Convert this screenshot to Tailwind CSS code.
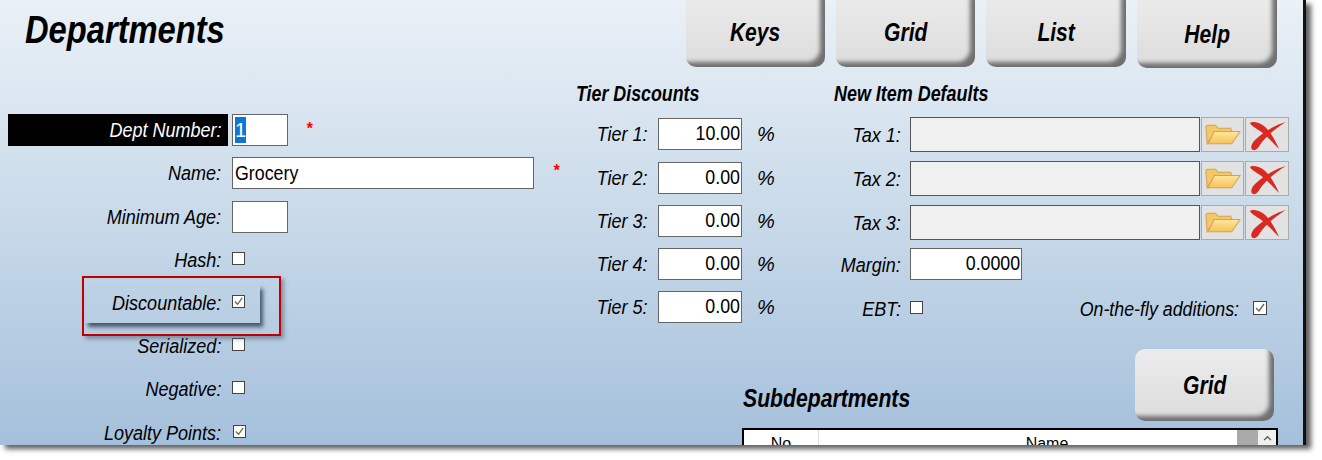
<!DOCTYPE html>
<html lang="en">
<head>
  <meta charset="UTF-8">
  <title>Departments</title>
  <script src="https://cdn.jsdelivr.net/npm/@tailwindcss/browser@4"></script>
</head>
<body class="bg-white font-['Liberation_Sans',Arial,sans-serif] text-black">
  <div class="relative w-[1322px] h-[460px] overflow-hidden bg-white">
    <!-- Window -->
    <div class="relative w-[1306px] h-[445px] overflow-hidden border-r-[3px] border-[#111] bg-gradient-to-b from-[#eaf1f7] via-[#c8d9e9] to-[#a5c0dc] shadow-[5px_4px_5px_rgba(40,40,40,0.75)]">

      <!-- Header -->
      <div class="flex h-[68px]">
        <h1 class="ml-[25px] mt-[9px] text-[38px] leading-[42px] font-bold italic origin-left scale-x-[0.86]">Departments</h1>
        <div class="ml-auto mr-[26px] flex gap-[11px] -mt-[8px]">
          <button class="w-[139px] h-[75px] rounded-[10px] bg-gradient-to-b from-[#ececec] to-[#dcdcdc] shadow-[inset_-8px_-8px_4px_-3px_#707070] pt-[6px] text-[26px] font-bold italic"><span class="inline-block scale-x-[0.81]">Keys</span></button>
          <button class="w-[139px] h-[75px] rounded-[10px] bg-gradient-to-b from-[#ececec] to-[#dcdcdc] shadow-[inset_-8px_-8px_4px_-3px_#707070] pt-[6px] text-[26px] font-bold italic"><span class="inline-block scale-x-[0.81]">Grid</span></button>
          <button class="w-[140px] h-[75px] rounded-[10px] bg-gradient-to-b from-[#ececec] to-[#dcdcdc] shadow-[inset_-8px_-8px_4px_-3px_#707070] pt-[6px] text-[26px] font-bold italic"><span class="inline-block scale-x-[0.81]">List</span></button>
          <button class="w-[140px] h-[76px] rounded-[10px] bg-gradient-to-b from-[#ececec] to-[#dcdcdc] shadow-[inset_-8px_-8px_4px_-3px_#707070] pt-[8px] text-[26px] font-bold italic"><span class="inline-block scale-x-[0.81]">Help</span></button>
        </div>
      </div>

      <div class="flex">
        <!-- Left column -->
        <div class="w-[576px] shrink-0 pt-[46px] text-[20px] italic">
          <div class="flex h-[43px] items-start">
            <div class="ml-[8px] w-[220px] h-[32px] bg-black text-white text-right pr-[7px] leading-[32px]"><span class="inline-block origin-right scale-x-[0.9]">Dept Number:</span></div>
            <div class="ml-[4px] w-[56px] h-[32px] border border-[#666] bg-white p-[2px] not-italic text-[20px] leading-[26px]"><span class="block w-[11px] bg-[#0b78d7] text-white">1</span></div>
            <span class="ml-[18px] mt-[3px] text-[#f00] text-[16px] font-bold">*</span>
          </div>
          <div class="flex h-[44px] items-start">
            <div class="w-[221px] text-right leading-[32px]"><span class="inline-block origin-right scale-x-[0.9]">Name:</span></div>
            <div class="ml-[11px] w-[302px] h-[32px] border border-[#666] bg-white pl-[2px] not-italic text-[20px] leading-[30px]"><span class="inline-block origin-left scale-x-[0.89]">Grocery</span></div>
            <span class="ml-[19px] mt-[2px] text-[#f00] text-[16px] font-bold">*</span>
          </div>
          <div class="flex h-[43px] items-start">
            <div class="w-[221px] text-right leading-[32px]"><span class="inline-block origin-right scale-x-[0.9]">Minimum Age:</span></div>
            <div class="ml-[11px] w-[56px] h-[32px] border border-[#666] bg-white"></div>
          </div>
          <div class="flex h-[43px] items-start">
            <div class="w-[221px] text-right leading-[32px]"><span class="inline-block origin-right scale-x-[0.9]">Hash:</span></div>
            <div class="ml-[11px] mt-[8px] w-[13px] h-[13px] border border-[#444] bg-white"></div>
          </div>
          <div class="flex h-[43px] items-start">
            <div class="w-[221px] text-right leading-[32px]"><span class="inline-block origin-right scale-x-[0.9]">Discountable:</span></div>
            <div class="ml-[11px] mt-[8px] w-[13px] h-[13px] border border-[#444] bg-white">
              <svg viewBox="0 0 12 12" class="w-[11px] h-[11px]"><path d="M2 6l3 3 5-7" fill="none" stroke="#666" stroke-width="1.4"/></svg>
            </div>
          </div>
          <div class="flex h-[43px] items-start">
            <div class="w-[221px] text-right leading-[32px]"><span class="inline-block origin-right scale-x-[0.9]">Serialized:</span></div>
            <div class="ml-[11px] mt-[8px] w-[13px] h-[13px] border border-[#444] bg-white"></div>
          </div>
          <div class="flex h-[44px] items-start">
            <div class="w-[221px] text-right leading-[32px]"><span class="inline-block origin-right scale-x-[0.9]">Negative:</span></div>
            <div class="ml-[11px] mt-[8px] w-[13px] h-[13px] border border-[#444] bg-white"></div>
          </div>
          <div class="flex h-[32px] items-start">
            <div class="w-[221px] text-right leading-[32px]"><span class="inline-block origin-right scale-x-[0.9]">Loyalty Points:</span></div>
            <div class="ml-[12px] mt-[8px] w-[13px] h-[13px] border border-[#444] bg-white">
              <svg viewBox="0 0 12 12" class="w-[11px] h-[11px]"><path d="M2 6l3 3 5-7" fill="none" stroke="#666" stroke-width="1.4"/></svg>
            </div>
          </div>
        </div>

        <!-- Tier discounts -->
        <div class="w-[258px] shrink-0 text-[20px] italic">
          <h2 class="mt-[13px] h-[37px] text-[22px] leading-[25px] font-bold origin-left scale-x-[0.81] whitespace-nowrap">Tier Discounts</h2>
          <div class="flex h-[44px] items-start">
            <div class="w-[72px] text-right leading-[32px]"><span class="inline-block origin-right scale-x-[0.9]">Tier 1:</span></div>
            <div class="ml-[10px] w-[84px] h-[32px] border border-[#666] bg-white pr-[1px] text-right not-italic text-[20px] leading-[28px]"><span class="inline-block origin-right scale-x-[0.89]">10.00</span></div>
            <span class="ml-[15px] leading-[32px]">%</span>
          </div>
          <div class="flex h-[43px] items-start">
            <div class="w-[72px] text-right leading-[32px]"><span class="inline-block origin-right scale-x-[0.9]">Tier 2:</span></div>
            <div class="ml-[10px] w-[84px] h-[32px] border border-[#666] bg-white pr-[1px] text-right not-italic text-[20px] leading-[28px]"><span class="inline-block origin-right scale-x-[0.89]">0.00</span></div>
            <span class="ml-[15px] leading-[32px]">%</span>
          </div>
          <div class="flex h-[43px] items-start">
            <div class="w-[72px] text-right leading-[32px]"><span class="inline-block origin-right scale-x-[0.9]">Tier 3:</span></div>
            <div class="ml-[10px] w-[84px] h-[32px] border border-[#666] bg-white pr-[1px] text-right not-italic text-[20px] leading-[28px]"><span class="inline-block origin-right scale-x-[0.89]">0.00</span></div>
            <span class="ml-[15px] leading-[32px]">%</span>
          </div>
          <div class="flex h-[43px] items-start">
            <div class="w-[72px] text-right leading-[32px]"><span class="inline-block origin-right scale-x-[0.9]">Tier 4:</span></div>
            <div class="ml-[10px] w-[84px] h-[32px] border border-[#666] bg-white pr-[1px] text-right not-italic text-[20px] leading-[28px]"><span class="inline-block origin-right scale-x-[0.89]">0.00</span></div>
            <span class="ml-[15px] leading-[32px]">%</span>
          </div>
          <div class="flex h-[43px] items-start">
            <div class="w-[72px] text-right leading-[32px]"><span class="inline-block origin-right scale-x-[0.9]">Tier 5:</span></div>
            <div class="ml-[10px] w-[84px] h-[32px] border border-[#666] bg-white pr-[1px] text-right not-italic text-[20px] leading-[28px]"><span class="inline-block origin-right scale-x-[0.89]">0.00</span></div>
            <span class="ml-[15px] leading-[32px]">%</span>
          </div>
        </div>

        <!-- New item defaults -->
        <div class="w-[469px] shrink-0 text-[20px] italic">
          <h2 class="mt-[13px] h-[36px] text-[22px] leading-[25px] font-bold origin-left scale-x-[0.815] whitespace-nowrap">New Item Defaults</h2>
          <div class="flex h-[44px] items-start">
            <div class="w-[67px] text-right leading-[36px]"><span class="inline-block origin-right scale-x-[0.9]">Tax 1:</span></div>
            <div class="ml-[9px] w-[290px] h-[35px] border border-[#555] bg-[#f0f0f0]"></div>
            <div class="ml-[1px] w-[43px] h-[35px] border border-[#aaa] bg-[#e2e2e2] flex items-center justify-center">
              <svg viewBox="1 1 35 20" class="w-[36px] h-[21px]"><defs><linearGradient id="fold" x1="0" y1="0" x2="0" y2="1"><stop offset="0" stop-color="#fde6a0"/><stop offset="1" stop-color="#f6c356"/></linearGradient></defs><path d="M3 20 2 4q0-2 2-2h7l3 3h12l1 3H11z" fill="#f5c863" stroke="#cfa45e"/><path d="M4 20 10 8h25l-8 12z" fill="url(#fold)" stroke="#cfa45e"/></svg>
            </div>
            <div class="ml-[1px] w-[44px] h-[35px] border border-[#aaa] bg-[#e2e2e2] flex items-center justify-center">
              <svg viewBox="0 0 40 32" class="w-[40px] h-[32px]"><path d="M39 3C28 6 16 13 8 21 4 25 3 30 6 31c4 1 6-4 9-8C21 16 30 8 39 3z" fill="#d92a22"/><path d="M3 4C5 2 12 3 17 7c7 6 12 16 15 23C26 24 19 16 13 12 9 9 4 7 3 4z" fill="#d92a22"/></svg>
            </div>
          </div>
          <div class="flex h-[44px] items-start">
            <div class="w-[67px] text-right leading-[36px]"><span class="inline-block origin-right scale-x-[0.9]">Tax 2:</span></div>
            <div class="ml-[9px] w-[290px] h-[35px] border border-[#555] bg-[#f0f0f0]"></div>
            <div class="ml-[1px] w-[43px] h-[35px] border border-[#aaa] bg-[#e2e2e2] flex items-center justify-center">
              <svg viewBox="1 1 35 20" class="w-[36px] h-[21px]"><path d="M3 20 2 4q0-2 2-2h7l3 3h12l1 3H11z" fill="#f5c863" stroke="#cfa45e"/><path d="M4 20 10 8h25l-8 12z" fill="url(#fold)" stroke="#cfa45e"/></svg>
            </div>
            <div class="ml-[1px] w-[44px] h-[35px] border border-[#aaa] bg-[#e2e2e2] flex items-center justify-center">
              <svg viewBox="0 0 40 32" class="w-[40px] h-[32px]"><path d="M39 3C28 6 16 13 8 21 4 25 3 30 6 31c4 1 6-4 9-8C21 16 30 8 39 3z" fill="#d92a22"/><path d="M3 4C5 2 12 3 17 7c7 6 12 16 15 23C26 24 19 16 13 12 9 9 4 7 3 4z" fill="#d92a22"/></svg>
            </div>
          </div>
          <div class="flex h-[43px] items-start">
            <div class="w-[67px] text-right leading-[36px]"><span class="inline-block origin-right scale-x-[0.9]">Tax 3:</span></div>
            <div class="ml-[9px] w-[290px] h-[35px] border border-[#555] bg-[#f0f0f0]"></div>
            <div class="ml-[1px] w-[43px] h-[35px] border border-[#aaa] bg-[#e2e2e2] flex items-center justify-center">
              <svg viewBox="1 1 35 20" class="w-[36px] h-[21px]"><path d="M3 20 2 4q0-2 2-2h7l3 3h12l1 3H11z" fill="#f5c863" stroke="#cfa45e"/><path d="M4 20 10 8h25l-8 12z" fill="url(#fold)" stroke="#cfa45e"/></svg>
            </div>
            <div class="ml-[1px] w-[44px] h-[35px] border border-[#aaa] bg-[#e2e2e2] flex items-center justify-center">
              <svg viewBox="0 0 40 32" class="w-[40px] h-[32px]"><path d="M39 3C28 6 16 13 8 21 4 25 3 30 6 31c4 1 6-4 9-8C21 16 30 8 39 3z" fill="#d92a22"/><path d="M3 4C5 2 12 3 17 7c7 6 12 16 15 23C26 24 19 16 13 12 9 9 4 7 3 4z" fill="#d92a22"/></svg>
            </div>
          </div>
          <div class="flex h-[44px] items-start">
            <div class="w-[67px] text-right leading-[34px]"><span class="inline-block origin-right scale-x-[0.9]">Margin:</span></div>
            <div class="ml-[9px] w-[112px] h-[32px] border border-[#666] bg-white pr-[1px] text-right not-italic text-[20px] leading-[28px]"><span class="inline-block origin-right scale-x-[0.89]">0.0000</span></div>
          </div>
          <div class="flex h-[48px] items-start">
            <div class="w-[67px] text-right leading-[34px]"><span class="inline-block origin-right scale-x-[0.9]">EBT:</span></div>
            <div class="ml-[9px] mt-[9px] w-[13px] h-[13px] border border-[#444] bg-white"></div>
            <div class="ml-auto leading-[34px]"><span class="inline-block origin-right scale-x-[0.89]">On-the-fly additions:</span></div>
            <div class="ml-[14px] mr-[36px] mt-[9px] w-[14px] h-[14px] border border-[#444] bg-white">
              <svg viewBox="0 0 12 12" class="w-[12px] h-[12px]"><path d="M2 6l3 3 5-7" fill="none" stroke="#666" stroke-width="1.4"/></svg>
            </div>
          </div>
          <div class="flex h-[80px] items-end -ml-[91px]">
            <div class="flex-1 mb-[8px]">
              <h2 class="text-[26px] leading-[28px] font-bold origin-left scale-x-[0.815] whitespace-nowrap">Subdepartments</h2>
            </div>
            <button class="mr-[29px] mb-[-1px] w-[139px] h-[72px] rounded-[10px] bg-gradient-to-b from-[#ececec] to-[#dcdcdc] shadow-[inset_-8px_-8px_4px_-3px_#707070] text-[26px] font-bold italic"><span class="inline-block scale-x-[0.81]">Grid</span></button>
          </div>
          <div class="-ml-[92px] mt-[8px] w-[536px] h-[40px] border-2 border-black bg-white flex not-italic text-[16px] leading-[22px]">
            <div class="w-[75px] text-center border-r border-[#ddd] pt-[3px]">No</div>
            <div class="flex-1 text-center pt-[3px] pl-[38px]">Name</div>
            <div class="w-[21px] bg-[#aaa]"></div>
            <div class="w-[18px] bg-[#f0f0f0] flex justify-center pt-[5px]">
              <svg viewBox="0 0 10 7" class="w-[9px] h-[6px]"><path d="M1 6l4-4 4 4" fill="none" stroke="#555" stroke-width="1.5"/></svg>
            </div>
          </div>
        </div>
      </div>

      <!-- Red callout over the Discountable row -->
      <div class="absolute left-[85px] top-[285px] w-[175px] h-[38px] shadow-[3px_4px_4px_rgba(60,75,95,0.9)]"></div>
      <div class="absolute left-[82px] top-[276px] w-[199px] h-[60px] border-2 border-[#c00000] shadow-[3px_3px_4px_rgba(80,95,115,0.55)]"></div>
    </div>
  </div>
</body>
</html>
